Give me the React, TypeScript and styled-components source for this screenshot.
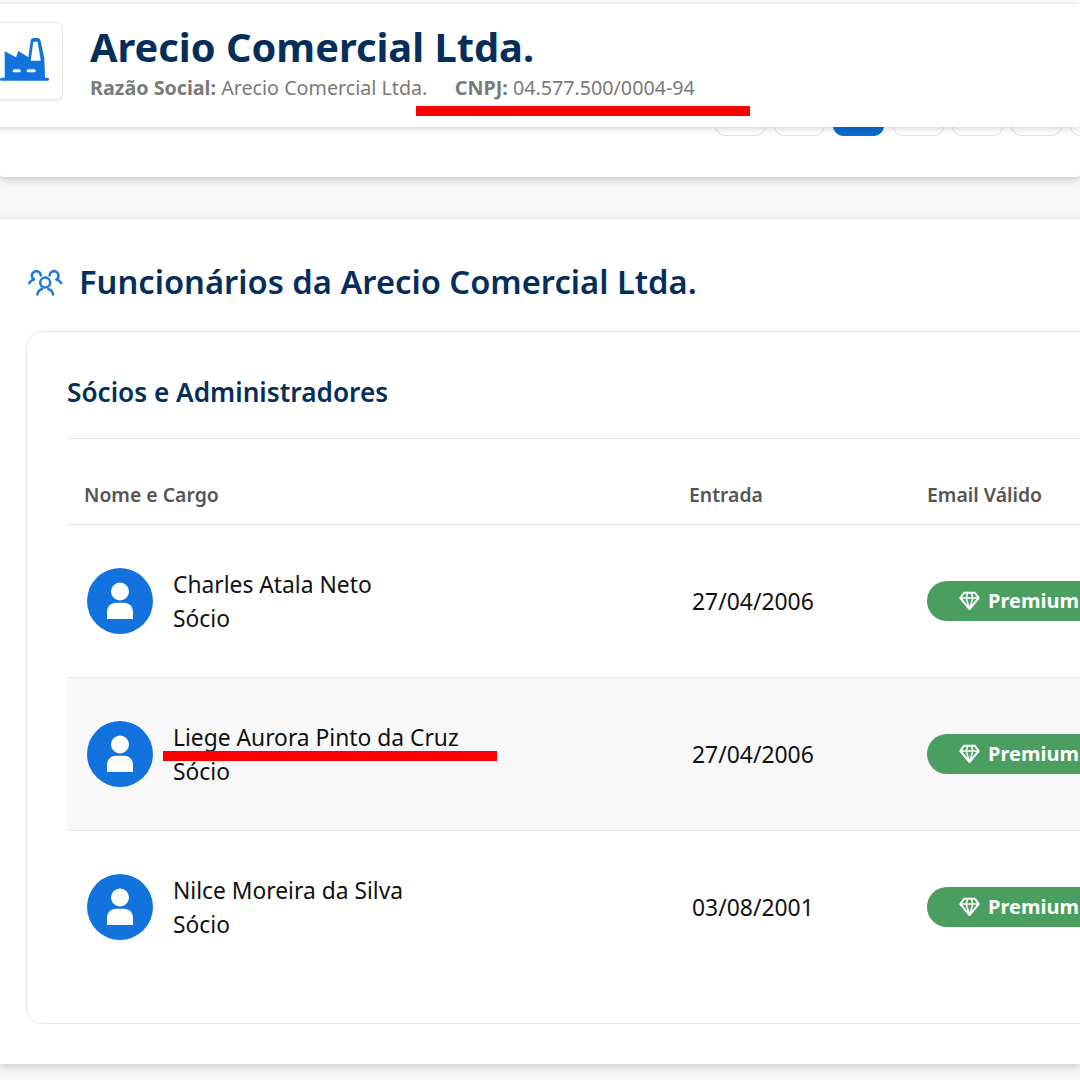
import React from 'react';
import styled, { createGlobalStyle } from 'styled-components';

const GlobalStyle = createGlobalStyle`
  html, body {
    margin: 0;
    padding: 0;
    width: 1080px;
    height: 1080px;
    overflow: hidden;
    background: #f8f8f8;
    font-family: "Noto Sans", "Open Sans", sans-serif;
  }
`;

const Page = styled.div`
  position: relative;
  width: 1080px;
  height: 1080px;
  overflow: hidden;
`;

const CompanyHeader = styled.header`
  position: absolute;
  top: 4px;
  left: -20px;
  right: 0;
  height: 123px;
  z-index: 2;
  display: flex;
  align-items: flex-start;
  gap: 27px;
  padding: 18px 0 0 5px;
  box-sizing: border-box;
  background: #fff;
  border-radius: 0 0 4px 4px;
  box-shadow: 0 1px 7px rgba(0, 0, 0, 0.2);
`;

const LogoBox = styled.div`
  width: 78px;
  height: 78px;
  box-sizing: border-box;
  display: flex;
  align-items: center;
  justify-content: center;
  padding: 0 0 3px 1px;
  background: #fff;
  border: 1px solid #e8e8e8;
  border-radius: 6px;
  box-shadow: 0 1px 2px rgba(0, 0, 0, 0.08);
`;

const CompanyText = styled.div`
  display: flex;
  flex-direction: column;
`;

const CompanyName = styled.h1`
  margin: 0;
  font-size: 39.8px;
  line-height: 50px;
  font-weight: 700;
  color: #052f5a;
`;

const CompanyMeta = styled.div`
  display: flex;
  gap: 27.5px;
  margin-top: 2px;
  font-size: 19.7px;
  line-height: 28px;
  color: #7a7a7a;

  b {
    font-weight: 700;
  }
`;

const TabsPanel = styled.nav`
  height: 177px;
  box-sizing: border-box;
  display: flex;
  align-items: flex-end;
  gap: 8.2px;
  padding: 0 0 41px 715px;
  background: #fff;
  border-radius: 0 0 4px 4px;
  box-shadow: 0 3px 9px rgba(0, 0, 0, 0.18);
`;

const TabButton = styled.div<{ $active?: boolean }>`
  width: 51px;
  height: 40px;
  box-sizing: border-box;
  flex: none;
  background: ${(p) => (p.$active ? '#0d6bcf' : '#fff')};
  border: 1px solid ${(p) => (p.$active ? '#0d6bcf' : '#e3e0dc')};
  border-radius: 10px;
`;

const MainPanel = styled.section`
  margin-top: 41px;
  height: 846px;
  box-sizing: border-box;
  padding: 0 0 0 26px;
  background: #fff;
  border-top: 1px solid #e6e6e6;
  box-shadow: 0 3px 9px rgba(0, 0, 0, 0.18);
`;

const SectionTitle = styled.div`
  display: flex;
  align-items: center;
  gap: 15px;
  height: 112px;
  padding: 13px 0 0 1px;
  box-sizing: border-box;
`;

const SectionHeading = styled.h2`
  margin: 0;
  font-size: 32.7px;
  line-height: 42px;
  font-weight: 600;
  color: #052f5a;
  white-space: nowrap;
`;

const Card = styled.div`
  width: 1300px;
  height: 693px;
  box-sizing: border-box;
  padding: 0 0 0 40px;
  border: 1px solid #e6e6e6;
  border-radius: 16px;
`;

const CardTitle = styled.h3`
  margin: 0;
  height: 107px;
  box-sizing: border-box;
  padding-top: 42px;
  font-size: 26.2px;
  line-height: 36px;
  font-weight: 600;
  color: #052f5a;
  border-bottom: 1px solid #e6e6e6;
`;

const HeadRow = styled.div`
  display: grid;
  grid-template-columns: 605px 238px 1fr;
  align-items: center;
  height: 86px;
  box-sizing: border-box;
  padding-top: 26px;
  border-bottom: 1px solid #e6e6e6;
`;

const HeadCell = styled.div`
  padding-left: 17px;
  font-size: 19.4px;
  font-weight: 600;
  color: #555;
`;

const Row = styled.div<{ $shaded?: boolean; $last?: boolean }>`
  display: grid;
  grid-template-columns: 605px 238px 1fr;
  align-items: center;
  height: 153px;
  box-sizing: border-box;
  background: ${(p) => (p.$shaded ? '#f8f8f8' : '#fff')};
  border-bottom: 1px solid ${(p) => (p.$last ? 'transparent' : '#e6e6e6')};
`;

const PersonCell = styled.div`
  display: flex;
  align-items: center;
  gap: 20px;
  padding-left: 20px;
`;

const Avatar = styled.div`
  width: 66px;
  height: 66px;
  flex: none;
  display: flex;
  align-items: center;
  justify-content: center;
  border-radius: 50%;
  background: #1273de;
`;

const PersonText = styled.div`
  padding-top: 2px;
  font-size: 22.8px;
  line-height: 34px;
  color: #111;
`;

const DateCell = styled.div`
  padding-left: 20px;
  font-size: 22.9px;
  color: #111;
`;

const BadgeCell = styled.div`
  padding-left: 17px;
`;

const PremiumBadge = styled.div`
  width: 220px;
  height: 40px;
  box-sizing: border-box;
  display: flex;
  align-items: center;
  gap: 8px;
  padding: 0 0 1px 32px;
  border-radius: 20px;
  background: #4a9e60;
  color: #fff;
  font-size: 20px;
  font-weight: 700;
`;

const RedMark = styled.div<{ $x: number; $y: number }>`
  position: absolute;
  left: ${(p) => p.$x}px;
  top: ${(p) => p.$y}px;
  width: 334px;
  height: 10px;
  z-index: 3;
  background: #ff0000;
`;

const TeamSvg = styled.svg`
  flex: none;
  margin-top: 2px;
`;

const FactoryIcon = () => (
  <svg width="49" height="43" viewBox="0 0 49 43">
    <path
      fill="#1273de"
      fillRule="evenodd"
      d="M4.7 13.3L16 19.3L18.3 13L28.3 19.3L30.7 2.5Q31 0 33 0H38Q40 0 40.5 2.5L44.3 20L45 40H4.7ZM33.3 3.7H37.7L40.7 22.7H30.7Z"
    />
    <rect x="0" y="39.7" width="49" height="3" rx="1.5" fill="#1273de" />
    <rect x="12.7" y="31.3" width="8" height="3" rx="1.5" fill="#fff" />
    <rect x="26.7" y="31.3" width="9" height="3" rx="1.5" fill="#fff" />
  </svg>
);

const TeamIcon = () => (
  <TeamSvg width="37" height="28" viewBox="0 0 37 28" fill="none" stroke="#1b7bdc" strokeWidth="2.5" strokeLinecap="round">
    <circle cx="18.2" cy="13.6" r="5" />
    <path d="M10.3 25.5C11 22.2 13 20.6 15 20M26.1 25.5C25.4 22.2 23.4 20.6 21.4 20" />
    <path d="M6.8 10.4A4.5 4.5 0 1 1 13.8 6.4M29.6 10.4A4.5 4.5 0 1 0 22.6 6.4" />
    <path d="M2.2 14.2C3.2 12.4 4.8 11 6.8 10.6M34.2 14.2C33.2 12.4 31.6 11 29.6 10.6" />
  </TeamSvg>
);

const PersonIcon = () => (
  <svg width="28" height="38" viewBox="0 0 28 38" fill="#fff">
    <circle cx="14" cy="9.5" r="9" />
    <path d="M1 37V30C1 24.5 5 20.8 10 20.8H18C23 20.8 27 24.5 27 30V37Z" />
  </svg>
);

const DiamondIcon = () => (
  <svg width="21" height="20" viewBox="0 0 21 20" fill="none" stroke="#fff" strokeWidth="2" strokeLinejoin="round">
    <path d="M5 1.8H16L19.7 7L10.5 18L1.3 7Z" />
    <path d="M1.3 7H19.7M7.2 7L10.5 18L13.8 7M7.2 7L8.6 2M13.8 7L12.4 2" strokeWidth="1.5" />
  </svg>
);

const partners = [
  { name: 'Charles Atala Neto', date: '27/04/2006' },
  { name: 'Liege Aurora Pinto da Cruz', date: '27/04/2006' },
  { name: 'Nilce Moreira da Silva', date: '03/08/2001' },
];

const App: React.FC = () => {
  return (
    <Page>
      <GlobalStyle />
      <CompanyHeader>
        <LogoBox>
          <FactoryIcon />
        </LogoBox>
        <CompanyText>
          <CompanyName>Arecio Comercial Ltda.</CompanyName>
          <CompanyMeta>
            <span>
              <b>Razão Social:</b> Arecio Comercial Ltda.
            </span>
            <span>
              <b>CNPJ:</b> 04.577.500/0004-94
            </span>
          </CompanyMeta>
        </CompanyText>
      </CompanyHeader>

      <TabsPanel>
        {[0, 1, 2, 3, 4, 5, 6].map((i) => (
          <TabButton key={i} $active={i === 2} />
        ))}
      </TabsPanel>

      <MainPanel>
        <SectionTitle>
          <TeamIcon />
          <SectionHeading>Funcionários da Arecio Comercial Ltda.</SectionHeading>
        </SectionTitle>
        <Card>
          <CardTitle>Sócios e Administradores</CardTitle>
          <HeadRow>
            <HeadCell>Nome e Cargo</HeadCell>
            <HeadCell>Entrada</HeadCell>
            <HeadCell>Email Válido</HeadCell>
          </HeadRow>
          {partners.map((p, i) => (
            <Row key={p.name} $shaded={i === 1} $last={i === 2}>
              <PersonCell>
                <Avatar>
                  <PersonIcon />
                </Avatar>
                <PersonText>
                  {p.name}
                  <br />
                  Sócio
                </PersonText>
              </PersonCell>
              <DateCell>{p.date}</DateCell>
              <BadgeCell>
                <PremiumBadge>
                  <DiamondIcon />
                  Premium
                </PremiumBadge>
              </BadgeCell>
            </Row>
          ))}
        </Card>
      </MainPanel>

      <RedMark $x={416} $y={106} />
      <RedMark $x={163} $y={751} />
    </Page>
  );
};

export default App;
